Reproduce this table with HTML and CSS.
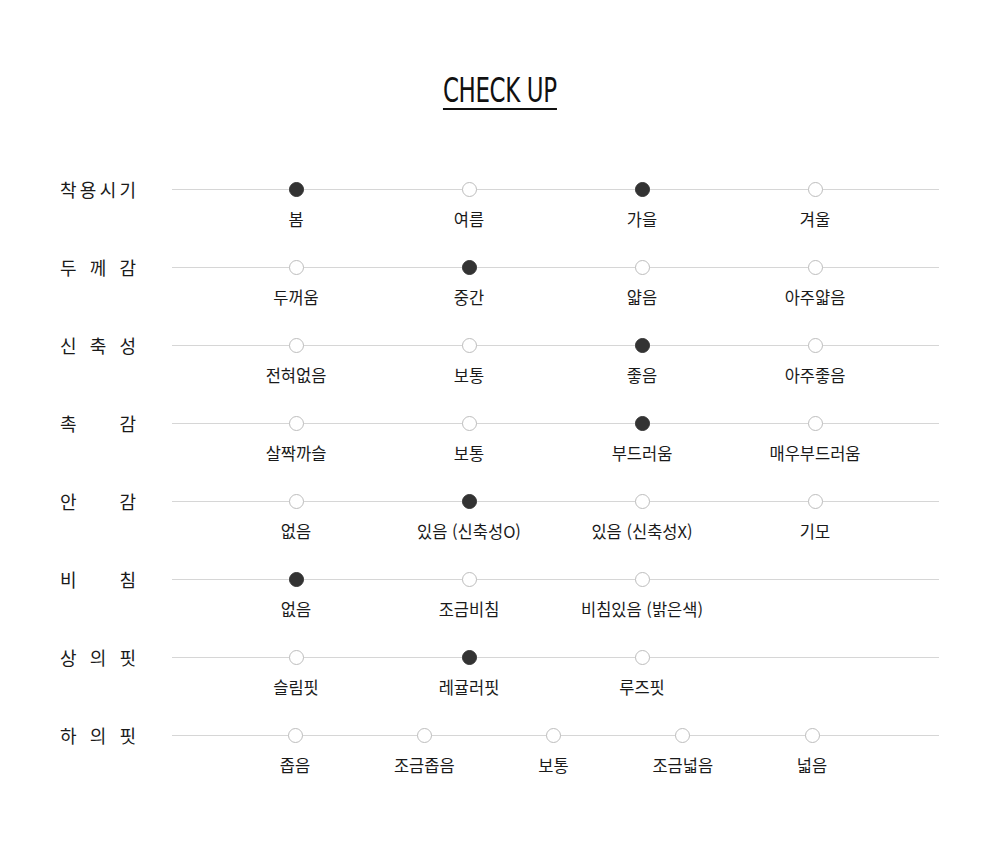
FILE: index.html
```html
<!DOCTYPE html>
<html lang="ko">
<head>
<meta charset="utf-8">
<title>CHECK UP</title>
<link rel="stylesheet" href="styles.css">
</head>
<body>
<div class="page">
  <div class="title-wrap"><h2 class="title">CHECK UP</h2></div>
  <ul class="check">
    <li class="row">
      <div class="label"><span>착</span><span>용</span><span>시</span><span>기</span></div>
      <div class="track">
        <div class="opt on"><i class="dot"></i><span>봄</span></div>
        <div class="opt"><i class="dot"></i><span>여름</span></div>
        <div class="opt on"><i class="dot"></i><span>가을</span></div>
        <div class="opt"><i class="dot"></i><span>겨울</span></div>
      </div>
    </li>
    <li class="row">
      <div class="label"><span>두</span><span>께</span><span>감</span></div>
      <div class="track">
        <div class="opt"><i class="dot"></i><span>두꺼움</span></div>
        <div class="opt on"><i class="dot"></i><span>중간</span></div>
        <div class="opt"><i class="dot"></i><span>얇음</span></div>
        <div class="opt"><i class="dot"></i><span>아주얇음</span></div>
      </div>
    </li>
    <li class="row">
      <div class="label"><span>신</span><span>축</span><span>성</span></div>
      <div class="track">
        <div class="opt"><i class="dot"></i><span>전혀없음</span></div>
        <div class="opt"><i class="dot"></i><span>보통</span></div>
        <div class="opt on"><i class="dot"></i><span>좋음</span></div>
        <div class="opt"><i class="dot"></i><span>아주좋음</span></div>
      </div>
    </li>
    <li class="row">
      <div class="label"><span>촉</span><span>감</span></div>
      <div class="track">
        <div class="opt"><i class="dot"></i><span>살짝까슬</span></div>
        <div class="opt"><i class="dot"></i><span>보통</span></div>
        <div class="opt on"><i class="dot"></i><span>부드러움</span></div>
        <div class="opt"><i class="dot"></i><span>매우부드러움</span></div>
      </div>
    </li>
    <li class="row">
      <div class="label"><span>안</span><span>감</span></div>
      <div class="track">
        <div class="opt"><i class="dot"></i><span>없음</span></div>
        <div class="opt on"><i class="dot"></i><span>있음 (신축성O)</span></div>
        <div class="opt"><i class="dot"></i><span>있음 (신축성X)</span></div>
        <div class="opt"><i class="dot"></i><span>기모</span></div>
      </div>
    </li>
    <li class="row">
      <div class="label"><span>비</span><span>침</span></div>
      <div class="track">
        <div class="opt on"><i class="dot"></i><span>없음</span></div>
        <div class="opt"><i class="dot"></i><span>조금비침</span></div>
        <div class="opt"><i class="dot"></i><span>비침있음 (밝은색)</span></div>
      </div>
    </li>
    <li class="row">
      <div class="label"><span>상</span><span>의</span><span>핏</span></div>
      <div class="track">
        <div class="opt"><i class="dot"></i><span>슬림핏</span></div>
        <div class="opt on"><i class="dot"></i><span>레귤러핏</span></div>
        <div class="opt"><i class="dot"></i><span>루즈핏</span></div>
      </div>
    </li>
    <li class="row">
      <div class="label"><span>하</span><span>의</span><span>핏</span></div>
      <div class="track five">
        <div class="opt"><i class="dot"></i><span>좁음</span></div>
        <div class="opt"><i class="dot"></i><span>조금좁음</span></div>
        <div class="opt"><i class="dot"></i><span>보통</span></div>
        <div class="opt"><i class="dot"></i><span>조금넓음</span></div>
        <div class="opt"><i class="dot"></i><span>넓음</span></div>
      </div>
    </li>
  </ul>
</div>
</body>
</html>
```
FILE: styles.css
```css
* { box-sizing: border-box; }
html, body { margin: 0; padding: 0; background: #fff; }
body {
  font-family: "Noto Sans CJK KR", "Noto Sans", sans-serif;
  color: #222;
}
.page {
  width: 1000px;
  padding-top: 72px;
}
.title-wrap {
  display: flex;
  justify-content: center;
}
.title {
  margin: 0;
  font-family: "Liberation Sans Narrow", "DejaVu Sans Condensed", "Liberation Sans", sans-serif;
  font-weight: normal;
  font-size: 34px;
  line-height: 36px;
  color: #111;
  letter-spacing: -0.5px;
  transform: scaleX(0.75);
  border-bottom: 2px solid #111;
  padding-bottom: 0;
}
.check {
  list-style: none;
  margin: 0;
  padding: 72px 0 0 60px;
}
.row {
  display: flex;
  align-items: flex-start;
  height: 78px;
}
.label {
  width: 76px;
  margin-right: 36px;
  display: flex;
  justify-content: space-between;
  font-size: 18px;
  line-height: 14px;
  height: 14px;
  color: #1a1a1a;
}
.track {
  position: relative;
  width: 767px;
  display: grid;
  grid-template-columns: repeat(4, 173px);
  padding-left: 37.5px;
}
.track::before {
  content: "";
  position: absolute;
  left: 0;
  right: 0;
  top: 7px;
  height: 1px;
  background: #d6d6d6;
}
.track.five {
  grid-template-columns: repeat(5, 129.25px);
  padding-left: 58.4px;
}
.opt {
  position: relative;
  display: flex;
  flex-direction: column;
  align-items: center;
}
.dot {
  display: block;
  width: 15px;
  height: 15px;
  border-radius: 50%;
  background: #fff;
  border: 1px solid #bdbdbd;
}
.opt.on .dot {
  background: #333;
  border-color: #333;
}
.opt span {
  margin-top: 10px;
  font-size: 16.5px;
  line-height: 24px;
  color: #1a1a1a;
  white-space: nowrap;
}
```
